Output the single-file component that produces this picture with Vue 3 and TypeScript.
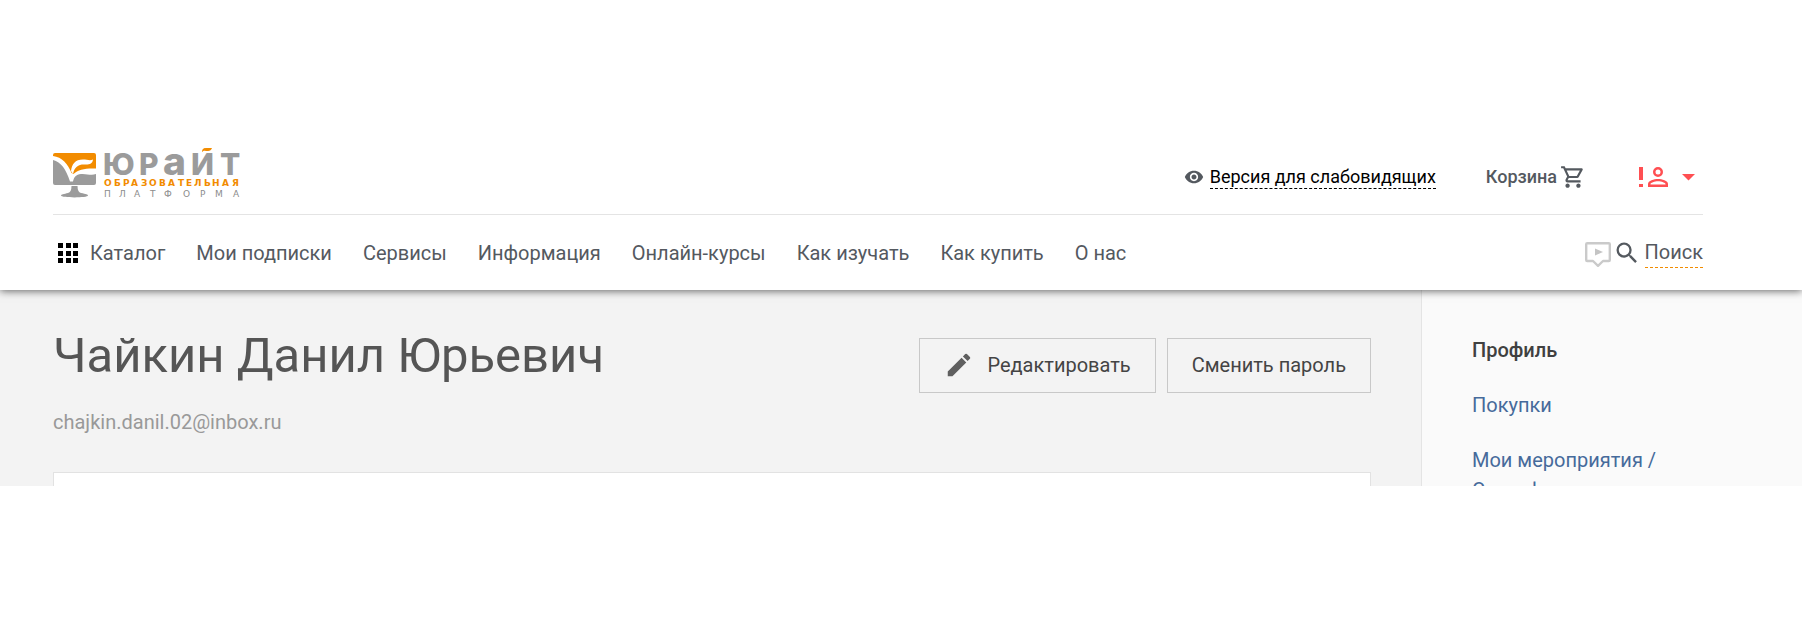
<script setup lang="ts">
interface NavItem {
  label: string
  href: string
}

const navItems: NavItem[] = [
  { label: 'Мои подписки', href: '#subscriptions' },
  { label: 'Сервисы', href: '#services' },
  { label: 'Информация', href: '#info' },
  { label: 'Онлайн-курсы', href: '#courses' },
  { label: 'Как изучать', href: '#how-to-study' },
  { label: 'Как купить', href: '#how-to-buy' },
  { label: 'О нас', href: '#about' },
]

const sideItems: NavItem[] = [
  { label: 'Покупки', href: '#purchases' },
  { label: 'Мои мероприятия / Сертификаты', href: '#events' },
]

const user = {
  name: 'Чайкин Данил Юрьевич',
  email: 'chajkin.danil.02@inbox.ru',
}
</script>

<template>
  <div class="page">
    <header class="header">
      <div class="top-row">
        <a class="logo" href="#home" aria-label="Юрайт, образовательная платформа">
          <svg width="188" height="52" viewBox="0 0 188 52">
            <path
              fill="#f28c00"
              d="M0 9V8Q0 6 2 6H41Q43 6 43 8V21.500C34 21 25 22 20.500 27L18.500 26C15 17 9 10 0 9Z"
            />
            <path
              fill="#fff"
              d="M18 24C19 17 22 12.500 30 12.500C34 12.500 37 14 40 12.500C39.500 17 36 18 31 17.500C25 17.500 21.500 20 20 27Z"
            />
            <path
              fill="#9b9b9b"
              d="M0 13C8 15 13 22 17 34.500H20C21 30 23 27.500 28 27C34 26.500 38 29 43 27V36Q43 38 41 38H2Q0 38 0 36Z"
            />
            <path
              fill="#9b9b9b"
              d="M18.500 39H24.500Q24.500 45 28 46C33 47 35 47.500 35 48.500C35 51 8 51 8 48.500C8 47.500 11 47 15 46Q18.500 45 18.500 39Z"
            />
            <g fill="#9b9b9b">
              <text class="logo-name" y="28" x="50 86">ЮР</text>
              <text class="logo-name logo-name-wide" x="110" y="28">а</text>
              <text class="logo-name" y="28" x="138 167">ИТ</text>
            </g>
            <path fill="#f28c00" d="M149 5C149 0 153 1 157 1H159Q158 4 155 4C152 4 151 3 149 5Z" />
            <text class="logo-kind" y="39" x="51 61 70 78 88 96 106 115 125 133 141 151 159 169 179">ОБРАЗОВАТЕЛЬНАЯ</text>
            <text class="logo-sort" y="50" x="51 66 81 97 111 130 147 162 180">ПЛАТФОРМА</text>
          </svg>
        </a>
        <div class="tools">
          <a class="vision" href="#accessible">
            <svg width="20" height="20" viewBox="0 0 24 24" fill="#54595f">
              <path
                d="M12 4.500C7 4.500 2.730 7.610 1 12c1.730 4.390 6 7.500 11 7.500s9.270-3.110 11-7.500c-1.730-4.390-6-7.500-11-7.500zM12 17c-2.760 0-5-2.240-5-5s2.240-5 5-5 5 2.240 5 5-2.240 5-5 5zm0-8c-1.660 0-3 1.340-3 3s1.340 3 3 3 3-1.340 3-3-1.340-3-3-3z"
              />
            </svg>
            <span>Версия для слабовидящих</span>
          </a>
          <a class="cart" href="#cart">
            <span>Корзина</span>
            <svg width="26" height="26" viewBox="0 0 24 24" fill="#54595f">
              <path
                d="M15.550 13c.75 0 1.410-.41 1.750-1.030l3.580-6.490A.996.996 0 0 0 20.010 4H5.210l-.94-2H1v2h2l3.600 7.590-1.350 2.440C4.520 15.370 5.480 17 7 17h12v-2H7l1.100-2h7.450zM6.160 6h12.150l-2.760 5H8.530L6.160 6zM7 18c-1.100 0-1.990.9-1.990 2S5.900 22 7 22s2-.9 2-2-.9-2-2-2zm10 0c-1.100 0-1.990.9-1.990 2s.89 2 1.990 2 2-.9 2-2-.9-2-2-2z"
              />
            </svg>
          </a>
          <button class="account" type="button" aria-label="Личный кабинет">
            <svg width="56" height="20" viewBox="0 0 56 20" fill="#ff4f52">
              <path d="M0 0H4V13H0zM0 17H4V20H0z" />
              <path
                fill-rule="evenodd"
                d="M19 0a5 5 0 1 0 0 10a5 5 0 1 0 0-10zM19 2.500a2.500 2.500 0 1 1 0 5a2.500 2.500 0 1 1 0-5zM9 20V17C9 13.500 15 12 19 12S29 13.500 29 17V20zM11.500 17.600H26.500V17C26.500 16 22.500 14.300 19 14.300S11.500 16 11.500 17z"
              />
              <path d="M43 7H56L49.500 13.500z" />
            </svg>
          </button>
        </div>
      </div>
      <div class="nav-row">
        <nav class="nav" aria-label="Основное меню">
          <button class="catalog" type="button">
            <svg width="20" height="20" viewBox="0 0 20 20">
              <path
                d="M0 0h5v5H0zM8 0h5v5H8zM15 0h5v5h-5zM0 8h5v5H0zM8 8h5v5H8zM15 8h5v5h-5zM0 15h5v5H0zM8 15h5v5H8zM15 15h5v5h-5z"
              />
            </svg>
            <span>Каталог</span>
          </button>
          <a v-for="item in navItems" :key="item.href" :href="item.href">{{ item.label }}</a>
        </nav>
        <div class="search">
          <button class="hint" type="button" aria-label="Видео-подсказка">
            <svg width="26" height="26" viewBox="0 0 26 26">
              <path
                fill="none"
                stroke="#cacaca"
                stroke-width="2.400"
                stroke-linejoin="round"
                d="M2.200 1.200H23.800Q24.800 1.200 24.800 2.200V18Q24.800 19 23.800 19H18L13 23.800L8 19H2.200Q1.200 19 1.200 18V2.200Q1.200 1.200 2.200 1.200Z"
              />
              <path fill="#c4c4c4" d="M10 6.500L18 10L10 13.500Z" />
            </svg>
          </button>
          <a class="search-link" href="#search">
            <svg width="28" height="28" viewBox="0 0 24 24" fill="#54595f">
              <path
                d="M15.500 14h-.79l-.28-.27A6.471 6.471 0 0 0 16 9.500 6.500 6.500 0 1 0 9.500 16c1.610 0 3.090-.59 4.230-1.570l.27.280v.79l5 4.990L20.490 19l-4.990-5zm-6 0C7.010 14 5 11.990 5 9.500S7.010 5 9.500 5 14 7.010 14 9.500 11.990 14 9.500 14z"
              />
            </svg>
            <span>Поиск</span>
          </a>
        </div>
      </div>
    </header>

    <div class="viewport">
      <main class="main">
        <div class="profile">
          <div class="person">
            <h1>{{ user.name }}</h1>
            <p>{{ user.email }}</p>
          </div>
          <div class="actions">
            <button type="button">
              <svg width="30" height="30" viewBox="0 0 24 24" fill="#5f5f5f">
                <path
                  d="M3 17.250V21h3.750L17.810 9.940l-3.750-3.750L3 17.250zM20.710 7.040a.996.996 0 0 0 0-1.410l-2.340-2.340a.996.996 0 0 0-1.410 0l-1.830 1.830 3.750 3.750 1.830-1.830z"
                />
              </svg>
              <span>Редактировать</span>
            </button>
            <button type="button">Сменить пароль</button>
          </div>
        </div>
        <section class="card" aria-label="Данные профиля"></section>
      </main>
      <aside class="side">
        <strong>Профиль</strong>
        <a v-for="item in sideItems" :key="item.href" :href="item.href">{{ item.label }}</a>
      </aside>
    </div>
  </div>
</template>

<style>
body {
  margin: 0;
  background: #fff;
}
</style>

<style scoped>
.page {
  font-family: Roboto, "Open Sans", sans-serif;
  font-size: 20px;
  line-height: 30px;
  color: #54595f;
}

a {
  color: inherit;
  text-decoration: none;
}

button {
  padding: 0;
  border: 0;
  background: none;
  font: inherit;
  color: inherit;
  cursor: pointer;
}

svg {
  display: block;
  flex: none;
}

.header {
  position: relative;
  z-index: 1;
  padding: 140px 99px 0 53px;
  background: #fff;
  box-shadow: 0 1px 8px rgba(0, 0, 0, 0.6);
}

.top-row {
  display: flex;
  justify-content: space-between;
  align-items: center;
  height: 74px;
  border-bottom: 1px solid #e4e4e4;
}

.logo {
  padding-bottom: 8px;
}

.logo svg {
  overflow: visible;
}

.logo-name {
  font: 800 30px Inter, sans-serif;
}

.logo-name-wide {
  font-size: 39px;
}

.logo-kind {
  font: 700 9px "DejaVu Sans", sans-serif;
  fill: #f28c00;
}

.logo-sort {
  font: 400 9px "DejaVu Sans", sans-serif;
  fill: #8c8c8c;
}

.tools {
  display: flex;
  align-items: center;
  font-size: 18px;
  font-weight: 500;
  line-height: 22px;
}

.vision {
  display: flex;
  align-items: center;
  gap: 6px;
  margin-right: 50px;
  font-weight: 400;
  color: #000;
}

.vision span {
  border-bottom: 1px dashed #000;
}

.cart {
  display: flex;
  align-items: center;
  gap: 3px;
  margin-right: 53px;
}

.account {
  margin-right: 8px;
}

.nav-row {
  display: flex;
  justify-content: space-between;
  align-items: center;
  height: 75px;
}

.nav {
  display: flex;
  align-items: center;
  gap: 31px;
  white-space: nowrap;
}

.catalog {
  display: flex;
  align-items: center;
  gap: 12px;
  padding-left: 5px;
}

.search {
  display: flex;
  align-items: center;
  gap: 2px;
}

.search-link {
  display: flex;
  align-items: center;
  gap: 4px;
}

.search-link span {
  border-bottom: 1px dashed #f28c00;
}

.hint {
  padding-top: 4px;
}

.viewport {
  display: flex;
  height: 196px;
  overflow: hidden;
  background: #f3f3f3;
}

.main {
  flex: 1;
  display: flex;
  flex-direction: column;
  padding: 36px 50px 0 53px;
}

.profile {
  display: flex;
  justify-content: space-between;
  align-items: flex-start;
}

.person h1 {
  margin: 0;
  font-size: 49px;
  font-weight: 400;
  line-height: 60px;
  color: #555;
}

.person p {
  margin: 21px 0 35px;
  color: #999;
}

.actions {
  display: flex;
  gap: 11px;
  padding-top: 12px;
}

.actions button {
  display: flex;
  align-items: center;
  gap: 13px;
  padding: 11px 24px 12px;
  border: 1px solid #c8c8c8;
  color: #444;
}

.card {
  flex: 1 0 200px;
  border: 1px solid #e2e2e2;
  background: #fff;
}

.side {
  box-sizing: border-box;
  width: 381px;
  padding: 45px 99px 0 50px;
  border-left: 1px solid #e4e4e4;
  background: #fafafa;
}

.side strong,
.side a {
  display: block;
  margin-bottom: 25px;
}

.side strong {
  font-weight: 500;
  color: #404040;
}

.side a {
  color: #466a9b;
}
</style>
